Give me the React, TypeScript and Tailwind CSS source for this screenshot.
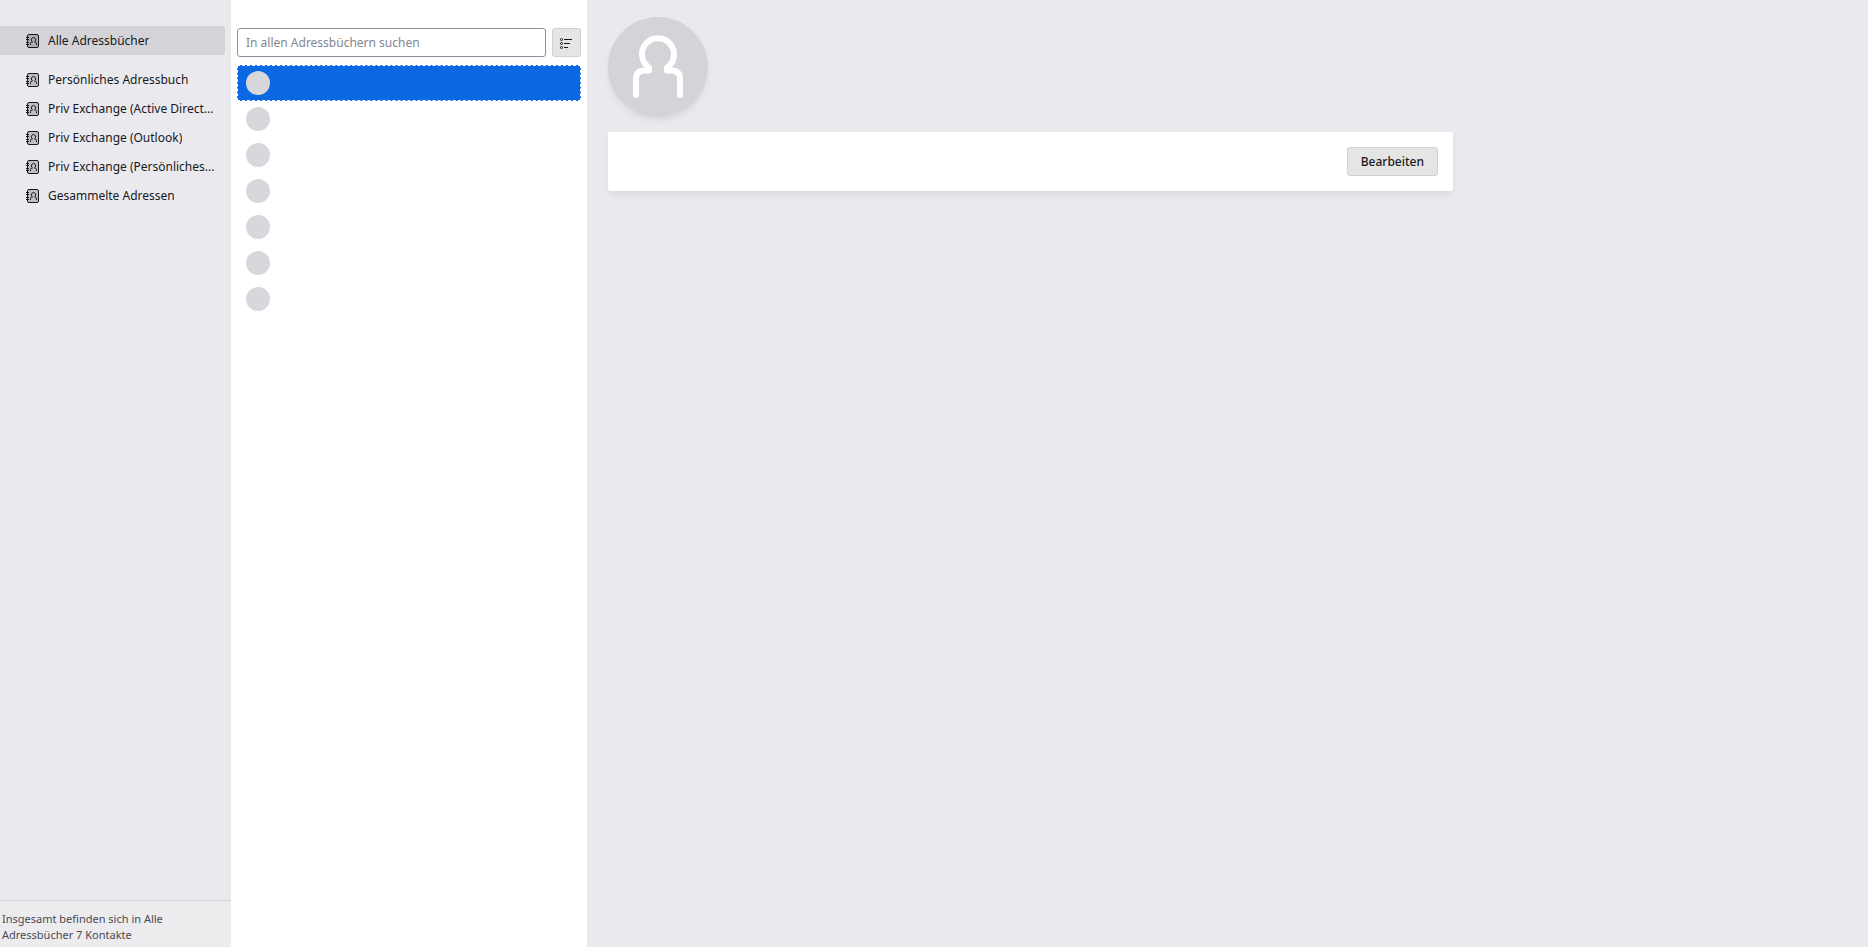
const BOOKS = [
  "Persönliches Adressbuch",
  "Priv Exchange (Active Direct...",
  "Priv Exchange (Outlook)",
  "Priv Exchange (Persönliches...",
  "Gesammelte Adressen",
]

const CONTACTS = [1, 2, 3, 4, 5, 6, 7]

function BookIcon() {
  return (
    <svg className="size-[15px] shrink-0" viewBox="0 0 15 15" fill="none" stroke="#18181b" aria-hidden="true">
      <rect x="1.500" y="1.500" width="11" height="13" rx="1.500" fill="#18181b" fillOpacity="0.2" />
      <path d="M0 4.500h3M0 6.500h3M0 9.500h3M0 11.500h3" />
      <path d="M4.500 12v-1.500q0-1.200 1.200-1.200h.5v-.8a2.200 2.200 0 1 1 2.600 0v.8h.5q1.200 0 1.200 1.200V12" />
    </svg>
  )
}

function ListOptionsIcon() {
  return (
    <svg className="size-[15px]" viewBox="0 0 15 15" fill="none" stroke="#18181b" aria-hidden="true">
      <circle cx="2.500" cy="4.500" r="1" />
      <circle cx="2.500" cy="8.500" r="1" />
      <circle cx="2.500" cy="12.500" r="1" />
      <path d="M5 4.500h8M5 8.500h6M5 12.500h4" />
    </svg>
  )
}

function PersonIcon() {
  return (
    <svg
      className="size-full"
      viewBox="0 0 100 100"
      fill="none"
      stroke="#fff"
      strokeWidth="6"
      strokeLinecap="round"
      strokeLinejoin="round"
      aria-hidden="true"
    >
      <path d="M28 78V62Q28 53.500 37 53.500H41V50.500A16 16 0 1 1 59 50.500V53.500H63Q72 53.500 72 62V78" />
    </svg>
  )
}

function BookLink({ name, active = false }: { name: string; active?: boolean }) {
  return (
    <li>
      <a
        href="#"
        className={`flex h-[29px] items-center gap-[7px] rounded-r-[3px] pr-1 pl-[26px] ${active ? "bg-[#d4d4d8]" : ""}`}
      >
        <BookIcon />
        <span className="truncate">{name}</span>
      </a>
    </li>
  )
}

function Sidebar() {
  return (
    <aside className="flex w-[231px] shrink-0 flex-col">
      <nav className="flex-1 pt-[26px] pr-1.5">
        <ul>
          <BookLink name="Alle Adressbücher" active />
        </ul>
        <ul className="mt-2.5">
          {BOOKS.map((book) => (
            <BookLink key={book} name={book} />
          ))}
        </ul>
      </nav>
      <p className="border-t border-[#d0d0d5] bg-[#ececee] pt-2.5 pr-10 pb-1 pl-0.5 text-[11px] leading-4 text-[#4a4a55]">
        Insgesamt befinden sich in Alle Adressbücher 7 Kontakte
      </p>
    </aside>
  )
}

function ContactList() {
  return (
    <section className="w-[356px] shrink-0 bg-white px-1.5 pt-7">
      <div className="flex gap-1.5">
        <input
          type="search"
          aria-label="In allen Adressbüchern suchen"
          placeholder="In allen Adressbüchern suchen"
          className="h-[29px] min-w-0 flex-1 rounded-[3px] border border-[#8f8f9d] px-2 placeholder:text-[#85858d]"
        />
        <button
          type="button"
          aria-label="Anzeigeoptionen"
          className="flex size-[29px] items-center justify-center rounded-[3px] border border-[#d0d0d2] bg-[#e5e5e5]"
        >
          <ListOptionsIcon />
        </button>
      </div>
      <ul className="mt-2">
        {CONTACTS.map((id) => (
          <li
            key={id}
            className={`flex h-9 items-center border border-dashed px-2 ${id === 1 ? "border-white bg-[#0a68e3]" : "border-transparent"}`}
          >
            <span className="size-6 rounded-full bg-[#d7d7dc]" />
          </li>
        ))}
      </ul>
    </section>
  )
}

function ContactDetails() {
  return (
    <main className="min-w-0 flex-1 px-[21px] pt-[17px]">
      <div className="size-[100px] rounded-full bg-[#d4d4d8] shadow-[0_4px_6px_-1px_rgba(58,57,68,0.1)]">
        <PersonIcon />
      </div>
      <div className="mt-[15px] flex max-w-[845px] justify-end rounded-[3px] bg-white p-[15px] shadow-[0_4px_6px_-1px_rgba(58,57,68,0.1)]">
        <button
          type="button"
          className="h-[29px] rounded-[3px] border border-[#d0d0d2] bg-[#e5e5e5] px-[13px] font-medium"
        >
          Bearbeiten
        </button>
      </div>
    </main>
  )
}

export default function App() {
  return (
    <div className="flex min-h-screen bg-[#eaeaee] font-['Noto_Sans',sans-serif] text-[12px] text-[#18181b]">
      <Sidebar />
      <ContactList />
      <ContactDetails />
    </div>
  )
}
